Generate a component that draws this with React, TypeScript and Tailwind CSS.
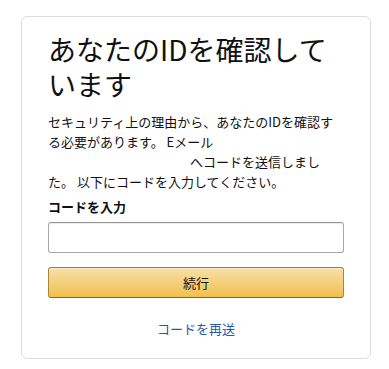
export default function App() {
  return (
    <div className="min-h-[369px] w-[389px] bg-white pl-[21px] pt-[16px] font-['Noto_Sans_CJK_JP',sans-serif] text-[#111]">
      {/* Verification card */}
      <div className="flex h-[343px] w-[350px] flex-col rounded-[6px] border border-[#ddd] px-[26px] pt-[15px]">
        <h1 className="text-[28px] font-normal leading-[35px]">
          あなたのIDを確認して
          <br />
          います
        </h1>

        <p className="mt-[10px] text-[13px] leading-[20px]">
          セキュリティ上の理由から、あなたのIDを確認す
          <br />
          る必要があります。 Eメール
          <br />
          <span className="inline-block w-[142px]" />
          へコードを送信しまし
          <br />
          た。 以下にコードを入力してください。
        </p>

        <label className="mt-[5px] text-[13px] font-bold leading-[20px]">コードを入力</label>
        <input
          type="text"
          className="mt-[5px] h-[31px] w-full rounded-[3px] border border-[#a6a6a6] border-t-[#949494] px-[7px] text-[13px] shadow-[inset_0_1px_0_rgba(0,0,0,0.07)] outline-none"
        />

        <button className="mt-[14px] h-[31px] w-full rounded-[3px] border border-[#a88734] border-b-[#846a29] border-t-[#9c7e31] bg-gradient-to-b from-[#f7dfa5] to-[#f0c14b] text-[13px] text-[#111] shadow-[inset_0_1px_0_rgba(255,255,255,0.4)]">
          続行
        </button>

        <div className="mt-[21px] text-center text-[13px] leading-[20px]">
          <a className="text-[#2a5aa6]">コードを再送</a>
        </div>
      </div>
    </div>
  );
}
